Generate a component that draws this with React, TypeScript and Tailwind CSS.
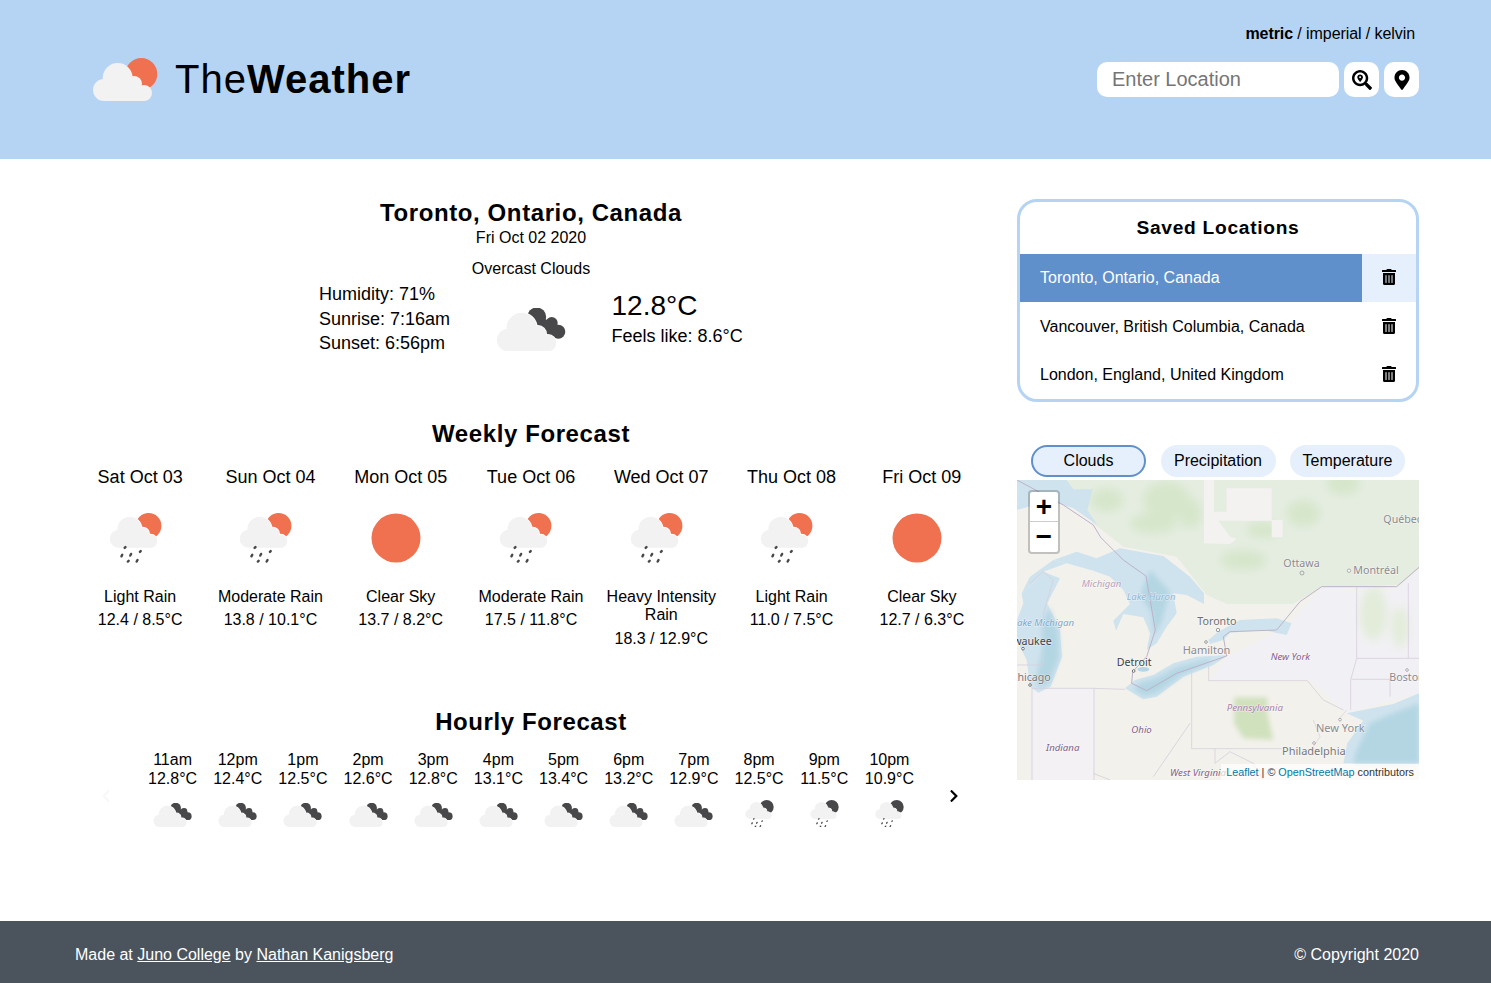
import { FaSearchLocation, FaMapMarkerAlt, FaTrashAlt, FaChevronRight, FaChevronLeft } from "react-icons/fa";

const SUN = "#ef714f";
const DARK = "#48484a";
const CLOUD = "#f2f2f2";

type IconKind = "overcast" | "sunRain" | "clear" | "darkRain";

// cloud shape shared by every weather icon, units are logo pixels
const CloudShape = ({ halo }: { halo?: string }) => (
  <g fill={CLOUD} stroke={halo} strokeWidth={halo ? 2 : 0} style={{ paintOrder: "stroke" }}>
    <circle cx="12" cy="32" r="11" />
    <circle cx="25.7" cy="20" r="15" />
    <circle cx="42" cy="26" r="8" />
    <circle cx="52" cy="35" r="8" />
    <rect x="12" y="28" width="40" height="15" stroke="none" />
  </g>
);

const CloudFill = () => (
  <g fill={CLOUD}>
    <circle cx="12" cy="32" r="11" />
    <circle cx="25.7" cy="20" r="15" />
    <circle cx="42" cy="26" r="8" />
    <circle cx="52" cy="35" r="8" />
    <rect x="12" y="28" width="40" height="15" />
  </g>
);

const Drops = () => (
  <g stroke={DARK} strokeWidth="3" strokeLinecap="round">
    <path d="M20.5 42.5 L19.5 43.5" />
    <path d="M16.5 52 L15.5 54" />
    <path d="M27.5 51 L26.5 53" />
    <path d="M39.5 47.5 L38.5 48.5" />
    <path d="M24.5 59.5 L23.5 60.5" />
    <path d="M35.5 58.5 L34.5 60.5" />
  </g>
);

const WeatherIcon = ({ kind, width, halo = "#ffffff" }: { kind: IconKind; width: number; halo?: string }) => {
  if (kind === "clear") {
    return (
      <svg width={width} height={width} viewBox="0 0 50 50">
        <circle cx="25" cy="25" r="24.5" fill={SUN} />
      </svg>
    );
  }
  if (kind === "overcast") {
    return (
      <svg width={width} height={(width * 44) / 70} viewBox="0 0 70 44">
        <g fill={DARK}>
          <circle cx="40.7" cy="9" r="9.5" />
          <circle cx="55.7" cy="15" r="6" />
          <circle cx="62.3" cy="23.7" r="7" />
          <path d="M34 4 L62 17 L62 30 L40 25 Z" />
        </g>
        <CloudShape halo={halo} />
        <CloudFill />
      </svg>
    );
  }
  const sun = kind === "sunRain" ? SUN : DARK;
  return (
    <svg width={width} height={(width * 63) / 66} viewBox="0 0 66 63">
      <circle cx="49.3" cy="16" r="16" fill={sun} />
      <CloudShape halo={halo} />
      <CloudFill />
      <Drops />
    </svg>
  );
};

const Logo = () => (
  <svg className="mt-[2px]" width="66" height="44" viewBox="0 0 66 44">
    <circle cx="49.3" cy="16" r="16" fill={SUN} />
    <CloudFill />
  </svg>
);

const weekly: { day: string; kind: IconKind; desc: string; temp: string }[] = [
  { day: "Sat Oct 03", kind: "sunRain", desc: "Light Rain", temp: "12.4 / 8.5°C" },
  { day: "Sun Oct 04", kind: "sunRain", desc: "Moderate Rain", temp: "13.8 / 10.1°C" },
  { day: "Mon Oct 05", kind: "clear", desc: "Clear Sky", temp: "13.7 / 8.2°C" },
  { day: "Tue Oct 06", kind: "sunRain", desc: "Moderate Rain", temp: "17.5 / 11.8°C" },
  { day: "Wed Oct 07", kind: "sunRain", desc: "Heavy Intensity Rain", temp: "18.3 / 12.9°C" },
  { day: "Thu Oct 08", kind: "sunRain", desc: "Light Rain", temp: "11.0 / 7.5°C" },
  { day: "Fri Oct 09", kind: "clear", desc: "Clear Sky", temp: "12.7 / 6.3°C" },
];

const hourly: { hour: string; temp: string; kind: IconKind }[] = [
  { hour: "11am", temp: "12.8°C", kind: "overcast" },
  { hour: "12pm", temp: "12.4°C", kind: "overcast" },
  { hour: "1pm", temp: "12.5°C", kind: "overcast" },
  { hour: "2pm", temp: "12.6°C", kind: "overcast" },
  { hour: "3pm", temp: "12.8°C", kind: "overcast" },
  { hour: "4pm", temp: "13.1°C", kind: "overcast" },
  { hour: "5pm", temp: "13.4°C", kind: "overcast" },
  { hour: "6pm", temp: "13.2°C", kind: "overcast" },
  { hour: "7pm", temp: "12.9°C", kind: "overcast" },
  { hour: "8pm", temp: "12.5°C", kind: "darkRain" },
  { hour: "9pm", temp: "11.5°C", kind: "darkRain" },
  { hour: "10pm", temp: "10.9°C", kind: "darkRain" },
];

const saved = ["Toronto, Ontario, Canada", "Vancouver, British Columbia, Canada", "London, England, United Kingdom"];

const MapLabel = ({ x, y, children, fill = "#8a8a90", italic = false, size = 33 }: { x: number; y: number; children: string; fill?: string; italic?: boolean; size?: number }) => (
  <text
    x={x}
    y={y}
    fill={fill}
    fontSize={size}
    fontStyle={italic ? "italic" : "normal"}
    fontFamily='"Noto Sans", sans-serif'
    stroke="#ffffff"
    strokeOpacity="0.6"
    strokeWidth="3"
    style={{ paintOrder: "stroke" }}
  >
    {children}
  </text>
);

// static drawing of the tile layer, coordinates are 3x map pixels
const MapTiles = () => (
  <svg className="block w-full h-full" viewBox="21 0 1206 900">
    <defs>
      <filter id="soft">
        <feGaussianBlur stdDeviation="14" />
      </filter>
      <filter id="soft2">
        <feGaussianBlur stdDeviation="8" />
      </filter>
    </defs>
    <rect x="21" y="0" width="1206" height="900" fill="#f3f1ec" />
    <path d="M160 0 H1227 V265 L1170 315 L935 320 L850 372 L650 372 L590 345 L500 230 L340 200 L250 130 Z" fill="#e5ede1" />
    <path d="M935 320 H1165 L1227 270 V640 L1010 700 L900 600 L600 600 L650 530 L830 440 Z" fill="#f1f0f4" />
    <path d="M66 625 H250 V900 H66 Z" fill="#f3f1f3" />
    <g fill="#d6e6cb" filter="url(#soft)">
      <ellipse cx="290" cy="60" rx="50" ry="35" />
      <ellipse cx="470" cy="60" rx="70" ry="55" />
      <ellipse cx="430" cy="130" rx="70" ry="30" />
      <ellipse cx="540" cy="100" rx="35" ry="45" />
      <ellipse cx="880" cy="100" rx="50" ry="40" />
      <ellipse cx="760" cy="150" rx="50" ry="25" />
      <ellipse cx="1000" cy="10" rx="50" ry="35" />
      <ellipse cx="700" cy="240" rx="70" ry="30" />
    </g>
    <g fill="#e2ecd9" filter="url(#soft)">
      <ellipse cx="1090" cy="400" rx="40" ry="80" />
      <ellipse cx="1170" cy="440" rx="25" ry="60" />
    </g>
    <path d="M582 0 H612 V95 H650 V25 H785 V120 H818 V172 H785 V122 H625 L660 170 L680 176 L660 192 L582 190 Z" fill="#f4f2f1" />
    <path d="M672 652 H772 V700 L790 780 L700 775 L672 730 Z" fill="#d0e1bd" filter="url(#soft2)" />
    <g fill="#cfe3ee">
      <path d="M21 0 H170 L190 28 L248 28 L232 90 L262 135 L190 85 L120 62 L21 90 Z" />
      <path d="M130 240 L200 215 L260 235 L330 205 L460 228 L540 290 L582 340 L582 372 L530 345 L490 340 L500 400 L470 440 L440 490 L410 510 L420 460 L400 412 L340 402 L318 452 L310 422 L360 372 L340 330 L300 290 L250 272 L170 250 Z" />
      <path d="M100 275 L150 295 L112 370 L150 450 L156 530 L122 620 L85 638 L60 620 L50 540 L30 500 L21 470 V420 L40 370 L35 340 L70 310 Z" />
      <path d="M130 240 L60 290 L35 340 L70 310 L100 275 L170 250 Z" />
      <path d="M595 480 L625 455 L690 420 L800 415 L845 430 L830 465 L760 450 L660 458 L640 480 L600 492 Z" />
      <path d="M345 625 L375 600 L430 585 L490 550 L560 530 L655 525 L610 555 L520 590 L440 650 L400 658 L370 640 Z" />
      <path d="M1227 640 L1150 672 L1010 700 L1060 722 L1012 790 L1000 850 H1227 Z" />
    </g>
    <g fill="#b4d6e3" filter="url(#soft2)">
      <path d="M370 628 L390 608 L440 595 L500 562 L600 535 L600 548 L520 582 L440 640 L400 648 Z" />
      <path d="M118 385 L145 455 L148 530 L118 610 L90 625 L78 600 L98 500 L95 430 Z" />
      <path d="M420 270 L480 335 L455 425 L432 470 L425 400 L390 345 Z" />
      <path d="M1227 670 L1150 700 L1080 730 L1040 810 L1030 850 H1227 Z" />
    </g>
    <ellipse cx="400" cy="568" rx="18" ry="7" fill="#b6d6e3" />
    <g fill="none" stroke="#bcb2c9" strokeWidth="3" strokeLinejoin="round">
      <path d="M21 0 L160 75 L250 135 L272 172 L310 210 L340 240 L408 288 L436 450 L410 530 L368 575 L365 610 L410 632 L500 580 L650 528 L640 470 L660 455 L800 450 L870 365 L935 320 H1160 L1227 262" />
    </g>
    <g fill="none" stroke="#d6cfdc" strokeWidth="2.5">
      <path d="M21 555 H100 V400 L130 300 L100 275 L60 310" />
      <path d="M66 625 H250 L345 628" />
      <path d="M66 625 V900" />
      <path d="M252 625 V900" />
      <path d="M545 570 V806 H815" />
      <path d="M596 560 V602 H892 L940 660 L1000 690" />
      <path d="M1040 320 V535 L1022 600 V690" />
      <path d="M1040 535 H1227" />
      <path d="M1025 598 H1140 V650" />
      <path d="M1195 310 V535" />
      <path d="M615 806 V850 L660 815 L730 850 L760 900" />
      <path d="M250 880 L300 900 M430 890 L540 730" />
    </g>
    <path d="M910 720 L930 770 L910 800 M1010 690 L985 720" fill="none" stroke="#d6cfdc" strokeWidth="2" />
    <MapLabel x={1120} y={128} size={32}>Québec</MapLabel>
    <MapLabel x={820} y={260} size={32}>Ottawa</MapLabel>
    <MapLabel x={1030} y={283} size={32}>Montréal</MapLabel>
    <circle cx="876" cy="279" r="6" fill="none" stroke="#8a8a90" strokeWidth="2" />
    <circle cx="1017" cy="272" r="5" fill="#fff" stroke="#8a8a90" strokeWidth="2" />
    <MapLabel x={562} y={436} size={32} fill="#6e6e72">Toronto</MapLabel>
    <circle cx="624" cy="450" r="5" fill="#fff" stroke="#6e6e72" strokeWidth="2" />
    <circle cx="588" cy="486" r="4" fill="#fff" stroke="#6e6e72" strokeWidth="2" />
    <MapLabel x={518} y={521}>Hamilton</MapLabel>
    <MapLabel x={320} y={559} size={32} fill="#404044">Detroit</MapLabel>
    <circle cx="371" cy="573" r="4" fill="#fff" stroke="#404044" strokeWidth="2" />
    <MapLabel x={-36} y={495} size={32} fill="#404044">Milwaukee</MapLabel>
    <circle cx="39" cy="506" r="4" fill="#fff" stroke="#404044" strokeWidth="2" />
    <MapLabel x={2} y={603} size={32} fill="#77777b">Chicago</MapLabel>
    <circle cx="60" cy="615" r="4" fill="#fff" stroke="#404044" strokeWidth="2" />
    <MapLabel x={1138} y={604} size={32}>Boston</MapLabel>
    <circle cx="1191" cy="570" r="4" fill="#fff" stroke="#8a8a90" strokeWidth="2" />
    <MapLabel x={918} y={755}>New York</MapLabel>
    <circle cx="990" cy="719" r="4" fill="#fff" stroke="#8a8a90" strokeWidth="2" />
    <circle cx="912" cy="789" r="4" fill="#fff" stroke="#8a8a90" strokeWidth="2" />
    <MapLabel x={816} y={824} fill="#77777b">Philadelphia</MapLabel>
    <MapLabel x={215} y={322} size={29} italic fill="#b79fc0">Michigan</MapLabel>
    <MapLabel x={350} y={361} size={29} italic fill="#8fb3d2">Lake Huron</MapLabel>
    <MapLabel x={7} y={437} size={29} italic fill="#7da5cc">Lake Michigan</MapLabel>
    <MapLabel x={782} y={540} size={29} italic fill="#80608a">New York</MapLabel>
    <MapLabel x={650} y={692} size={29} italic fill="#a683ad">Pennsylvania</MapLabel>
    <MapLabel x={364} y={760} size={29} italic fill="#80608a">Ohio</MapLabel>
    <MapLabel x={108} y={813} size={29} italic fill="#80608a">Indiana</MapLabel>
    <MapLabel x={480} y={888} size={29} italic fill="#80608a">West Virginia</MapLabel>
  </svg>
);

export default function App() {
  return (
    <div className="min-h-screen flex flex-col bg-white text-black font-['Liberation_Sans',Arial,sans-serif]">
      <header className="h-[159px] bg-[#b5d4f3] pl-[92px] pr-[72px] flex justify-between">
        <div className="flex items-center h-[158px] gap-[17px]">
          <Logo />
          <h1 className="text-[40px] leading-[46px] tracking-[1px]">
            The<span className="font-bold">Weather</span>
          </h1>
        </div>
        <div className="flex flex-col items-end pt-[25px]">
          <p className="text-[16px] leading-[18px] pr-[4px] tracking-[-0.08px]">
            <span className="font-bold">metric</span> / imperial / kelvin
          </p>
          <div className="flex mt-[19px] gap-[5px]">
            <input
              placeholder="Enter Location"
              className="w-[242px] h-[35px] rounded-[10px] bg-white pl-[15px] text-[20px] outline-none placeholder:text-[#757575]"
            />
            <button className="w-[35px] h-[35px] rounded-[10px] bg-white flex items-center justify-center">
              <FaSearchLocation className="w-[20px] h-[20px]" />
            </button>
            <button className="w-[35px] h-[35px] rounded-[10px] bg-white flex items-center justify-center">
              <FaMapMarkerAlt className="w-[20px] h-[20px]" />
            </button>
          </div>
        </div>
      </header>

      <main className="flex-1 flex pl-[75px] pr-[72px] pt-[40px] gap-[30px]">
        <section className="w-[912px] text-center">
          <h2 className="text-[24px] leading-[28px] font-bold tracking-[0.6px]">Toronto, Ontario, Canada</h2>
          <p className="text-[16px] leading-[18px] mt-[2px]">Fri Oct 02 2020</p>
          <p className="text-[16px] leading-[18px] mt-[13px]">Overcast Clouds</p>
          <div className="flex items-start justify-center mt-[4px] text-left text-[18px]">
            <div className="w-[177.5px] pl-[0.5px] leading-[24.5px]">
              <p>Humidity: 71%</p>
              <p>Sunrise: 7:16am</p>
              <p>Sunset: 6:56pm</p>
            </div>
            <div className="w-[115.5px] pt-[26px]">
              <WeatherIcon kind="overcast" width={70} />
            </div>
            <div className="w-[132px] pt-[8px]">
              <p className="text-[28px] leading-[32px]">12.8°C</p>
              <p className="leading-[20px] mt-[4px] whitespace-nowrap">Feels like: 8.6°C</p>
            </div>
          </div>

          <h2 className="text-[24px] leading-[28px] font-bold tracking-[0.6px] mt-[64px]">Weekly Forecast</h2>
          <div className="grid grid-cols-7 mt-[19px]">
            {weekly.map((d) => (
              <div key={d.day} className="flex flex-col items-center">
                <p className="text-[18px] leading-[20px]">{d.day}</p>
                <div className="h-[50px] mt-[26px] flex justify-center pr-[10px]">
                  <WeatherIcon kind={d.kind} width={d.kind === "clear" ? 50 : 53} />
                </div>
                <p className="text-[16px] leading-[18.4px] mt-[25px] px-[5px]">{d.desc}</p>
                <p className="text-[16px] leading-[18.4px] mt-[5.5px]">{d.temp}</p>
              </div>
            ))}
          </div>

          <h2 className="text-[24px] leading-[28px] font-bold tracking-[0.6px] mt-[60px]">Hourly Forecast</h2>
          <div className="flex items-center mt-[14px]">
            <div className="w-[65px] pt-[14px] pl-[24px]">
              <FaChevronLeft className="w-[14px] h-[14px] text-[#f8f8f8]" />
            </div>
            <div className="w-[782px] grid grid-cols-12">
              {hourly.map((h) => (
                <div key={h.hour} className="flex flex-col items-center">
                  <p className="text-[16px] leading-[19px]">{h.hour}</p>
                  <p className="text-[16px] leading-[19px]">{h.temp}</p>
                  <div className="h-[30px] mt-[9px] flex items-end justify-center">
                    <WeatherIcon kind={h.kind} width={h.kind === "overcast" ? 39 : 29} />
                  </div>
                </div>
              ))}
            </div>
            <div className="w-[65px] pl-[25px] pt-[14px]">
              <FaChevronRight className="w-[14px] h-[14px]" />
            </div>
          </div>
        </section>

        <aside className="w-[402px]">
          <div className="border-[3px] border-[#b5d4f3] rounded-[20px] overflow-hidden">
            <h3 className="h-[52px] flex items-center justify-center text-[19.2px] font-bold tracking-[0.7px]">Saved Locations</h3>
            {saved.map((name, i) => (
              <div key={name} className="flex h-[48.4px] items-stretch">
                <div className={`flex-1 pl-[20px] flex items-center text-[16px] ${i === 0 ? "bg-[#5f90cc] text-white" : ""}`}>{name}</div>
                <div className={`w-[54px] flex items-center justify-center pb-[2px] ${i === 0 ? "bg-[#e6f0fc]" : ""}`}>
                  <FaTrashAlt className="w-[14px] h-[16px]" />
                </div>
              </div>
            ))}
          </div>

          <div className="flex justify-center gap-[14.5px] mt-[43px] mb-[3px]">
            <button className="w-[115px] h-[32px] rounded-[16px] bg-[#e6f0fc] border-2 border-[#5f90cc] text-[16px]">Clouds</button>
            <button className="w-[115px] h-[32px] rounded-[16px] bg-[#e6f0fc] text-[16px]">Precipitation</button>
            <button className="w-[115px] h-[32px] rounded-[16px] bg-[#e6f0fc] text-[16px]">Temperature</button>
          </div>

          <div className="relative h-[300px] overflow-hidden">
            <MapTiles />
            <div className="absolute left-[11px] top-[10px] w-[32px] rounded-[4px] border-2 border-black/20 bg-clip-padding bg-white">
              <div className="h-[30px] flex items-center justify-center text-[28px] leading-none font-bold border-b border-[#cccccc] font-['Liberation_Mono',monospace] pt-[4px]">+</div>
              <div className="h-[30px] flex items-center justify-center text-[28px] leading-none font-bold font-['Liberation_Mono',monospace] pt-[3px]">−</div>
            </div>
            <div className="absolute right-0 bottom-0 h-[16px] px-[5px] bg-white/70 text-[10.8px] leading-[17px] text-[#333333] whitespace-nowrap">
              <span className="text-[#0078a8]">Leaflet</span> | © <span className="text-[#0078a8]">OpenStreetMap</span> contributors
            </div>
          </div>
        </aside>
      </main>

      <footer className="h-[62px] bg-[#4b535d] text-white text-[16px] pl-[75px] pr-[72px] pt-[6px] flex items-center justify-between">
        <p>
          Made at <span className="underline">Juno College</span> by <span className="underline">Nathan Kanigsberg</span>
        </p>
        <p>© Copyright 2020</p>
      </footer>
    </div>
  );
}
